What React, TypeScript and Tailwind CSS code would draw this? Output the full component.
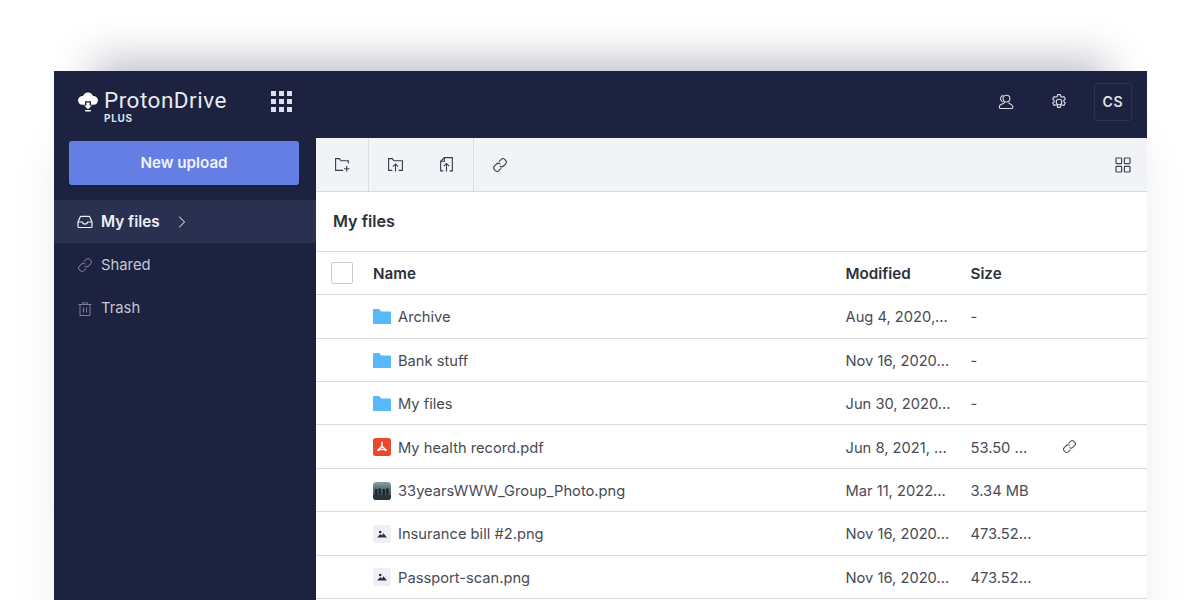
import { ChevronRight } from 'lucide-react';

const FONT = 'font-[Inter,"Noto_Sans",sans-serif]';

type Kind = 'folder' | 'pdf' | 'photo' | 'image';

const ROWS: Array<{ name: string; modified: string; size: string; kind: Kind; linked?: boolean }> = [
  { name: 'Archive', modified: 'Aug 4, 2020,...', size: '-', kind: 'folder' },
  { name: 'Bank stuff', modified: 'Nov 16, 2020...', size: '-', kind: 'folder' },
  { name: 'My files', modified: 'Jun 30, 2020...', size: '-', kind: 'folder' },
  { name: 'My health record.pdf', modified: 'Jun 8, 2021, ...', size: '53.50 ...', kind: 'pdf', linked: true },
  { name: '33yearsWWW_Group_Photo.png', modified: 'Mar 11, 2022...', size: '3.34 MB', kind: 'photo' },
  { name: 'Insurance bill #2.png', modified: 'Nov 16, 2020...', size: '473.52...', kind: 'image' },
  { name: 'Passport-scan.png', modified: 'Nov 16, 2020...', size: '473.52...', kind: 'image' },
];

function LinkIcon({ className }: { className?: string }) {
  return (
    <svg viewBox="0 0 16 16" fill="none" stroke="currentColor" strokeWidth="1.1" className={className}>
      <path d="M7 4.6 9.2 2.4a2.5 2.5 0 0 1 3.5 0l.9.9a2.5 2.5 0 0 1 0 3.5l-2.2 2.2a2.5 2.5 0 0 1-3.5 0" />
      <path d="M9 11.4 6.8 13.6a2.5 2.5 0 0 1-3.5 0l-.9-.9a2.5 2.5 0 0 1 0-3.5l2.2-2.2a2.5 2.5 0 0 1 3.5 0" />
    </svg>
  );
}

function FileIcon({ kind }: { kind: Kind }) {
  if (kind === 'folder') {
    return (
      <svg viewBox="0 0 18 15" className="h-[15px] w-[18px]">
        <path d="M0 .6A.6.6 0 0 1 .6 0h5.6l2 2.4h9.2a.6.6 0 0 1 .6.6v11.4a.6.6 0 0 1-.6.6H.6a.6.6 0 0 1-.6-.6Z" fill="#5ab8f8" />
      </svg>
    );
  }
  if (kind === 'pdf') {
    return (
      <svg viewBox="0 0 18 18" className="h-[18px] w-[18px]">
        <rect width="18" height="18" rx="2.5" fill="#e8492f" />
        <path d="M9 3.8v4.4M9 8.2 4.4 12.6M9 8.2l4.6 4.4M4.4 12.6 9 11.2l4.6 1.4" stroke="#fff" strokeWidth="1.4" fill="none" />
      </svg>
    );
  }
  if (kind === 'photo') {
    return (
      <svg viewBox="0 0 18 18" className="h-[18px] w-[18px]">
        <defs>
          <clipPath id="photo-clip">
            <rect width="18" height="18" rx="3.5" />
          </clipPath>
          <linearGradient id="photo-sky" x1="0" y1="0" x2="0" y2="1">
            <stop offset="0" stopColor="#8f9f9c" />
            <stop offset="0.35" stopColor="#5c7480" />
            <stop offset="1" stopColor="#2b3a44" />
          </linearGradient>
        </defs>
        <g clipPath="url(#photo-clip)">
          <rect width="18" height="18" fill="url(#photo-sky)" />
          <path d="M2 7h2.4v6H2ZM5.5 6.5h2.4v6H5.5ZM9.5 7H12v6H9.5ZM13 6.5h2.6v6H13Z" fill="#1e272c" />
          <rect y="13" width="18" height="5" fill="#28343b" />
        </g>
      </svg>
    );
  }
  return (
    <svg viewBox="0 0 18 18" className="h-[18px] w-[18px]">
      <rect width="18" height="18" rx="2.5" fill="#eef0f5" />
      <circle cx="7.2" cy="7" r="1.3" fill="#2c3140" />
      <path d="M4 12.6 7.4 9l1.5 1.4 1.6-2.2 3.5 4.4Z" fill="#2c3140" />
    </svg>
  );
}

function LogoMark() {
  return (
    <svg viewBox="0 0 20 20" className="h-5 w-5 text-white">
      <path
        d="M10 0.5a5.2 5.2 0 0 1 4.9 3.6A4.6 4.6 0 0 1 20 8.3c0 2.5-1.9 4.5-4.4 4.5H13V9.2H7v3.6H4.4C1.9 12.8 0 10.8 0 8.3a4.6 4.6 0 0 1 5.1-4.2A5.2 5.2 0 0 1 10 .5Z"
        fill="currentColor"
      />
      <path d="M8.4 10.4h3.2v3h2.2L10 17.2l-3.8-3.8h2.2Z" fill="currentColor" />
      <rect x="7" y="18" width="6" height="1.5" rx="0.7" fill="currentColor" />
    </svg>
  );
}

function ToolIcon({ d }: { d: string[] }) {
  return (
    <svg viewBox="0 0 16 16" fill="none" stroke="currentColor" strokeWidth="1.05" className="h-[17px] w-[17px] text-[#3a3e4c]">
      {d.map((p) => (
        <path key={p} d={p} />
      ))}
    </svg>
  );
}

function Th({ className, children }: { className: string; children: string }) {
  return <div className={`pt-[3px] text-[15.2px] font-semibold text-[#2c3039] ${className}`}>{children}</div>;
}

export default function App() {
  return (
    <div className={`h-[600px] w-[1200px] overflow-hidden bg-white pl-[54px] pt-[71px] ${FONT}`}>
      <div className="flex h-[540px] w-[1093px] flex-col bg-[#1c223f] shadow-[0_-50px_40px_-40px_rgba(28,34,63,0.3),0_70px_50px_-10px_rgba(28,34,63,0.11)]">
        {/* top bar */}
        <header className="flex h-[67px] shrink-0 items-center justify-between pb-[6px] pl-6 pr-[15px]">
          <div className="flex items-center">
            <LogoMark />
            <div className="ml-[6px] flex w-[124px] flex-col">
              <span className="mt-[10px] text-[22.5px] font-normal leading-[20px] tracking-[0.5px] text-[#e8eaf2] font-[Roboto,sans-serif]">ProtonDrive</span>
              <span className="mt-[3px] text-[10px] font-bold leading-[10px] tracking-[0.7px] text-[#dfe1ea]">PLUS</span>
            </div>
            <div className="ml-[43px] grid grid-cols-3 gap-[3.5px]">
              {Array.from({ length: 9 }).map((_, i) => (
                <span key={i} className="h-[4.5px] w-[4.5px] bg-[#dde0ea]" />
              ))}
            </div>
          </div>
          <div className="flex items-center">
            <svg viewBox="0 0 18 18" fill="none" stroke="currentColor" strokeWidth="1.1" className="h-[18px] w-[18px] text-[#d8dbe6]">
              <circle cx="9.5" cy="5.6" r="3.4" />
              <path d="M6.4 2.4A3.3 3.3 0 0 0 5 8.4l.9.4" />
              <path d="M7.8 9.6 3 12.3a1.3 1.3 0 0 0-.6 1.1v1.1c0 .6.4 1 1 1h11.4c.6 0 1-.4 1-1v-1c0-.5-.2-.9-.6-1.1l-3.7-2.7" />
            </svg>
            <svg viewBox="0 0 18 18" fill="none" stroke="currentColor" strokeWidth="1.1" className="ml-[35px] h-[18px] w-[18px] text-[#d8dbe6]">
              <circle cx="9" cy="9" r="2.8" />
              <path d="M7.6 1.6h2.8l.4 2 1.2.7 1.9-.7 1.4 2.4-1.5 1.3v1.4l1.5 1.3-1.4 2.4-1.9-.7-1.2.7-.4 2H7.6l-.4-2-1.2-.7-1.9.7-1.4-2.4 1.5-1.3V7.3L2.7 6l1.4-2.4 1.9.7 1.2-.7Z" strokeLinejoin="round" />
            </svg>
            <div className="ml-[26px] flex h-[38px] w-[38px] items-center justify-center rounded-[3px] border border-[#2b3252] text-sm font-semibold tracking-[0.8px] text-[#dfe1ea]">
              CS
            </div>
          </div>
        </header>

        <div className="flex min-h-0 flex-1">
          {/* sidebar */}
          <aside className="w-[262px] shrink-0">
            <div className="pl-[15px] pr-[17px] pt-[3px]">
              <button className="flex h-[44px] w-full items-center justify-center rounded-[3px] bg-[#657ee4] text-[15.2px] font-semibold text-[#f2f4fd]">
                New upload
              </button>
            </div>
            <nav className="mt-[15px] text-[14.8px]">
              <div className="flex h-[43px] items-center bg-[#2a3050] pl-[23px] font-semibold text-[#eef0f5]">
                <svg viewBox="0 0 16 16" fill="none" stroke="currentColor" strokeWidth="1.2" className="h-4 w-4">
                  <path d="M1 8 3.2 3a1 1 0 0 1 .9-.6h7.8a1 1 0 0 1 .9.6L15 8v4.4a1.1 1.1 0 0 1-1.1 1.1H2.1A1.1 1.1 0 0 1 1 12.4Z" />
                  <path d="M1 8h4.3a2.8 2.8 0 0 0 5.4 0H15" />
                </svg>
                <span className="ml-2 pt-[2px] text-[15.3px]">My files</span>
                <ChevronRight className="ml-3 h-5 w-5 text-[#d4d7e2]" strokeWidth={1.25} />
              </div>
              <div className="flex h-[44px] items-center pl-[23px] text-[#c4c7d4]">
                <LinkIcon className="h-4 w-4 text-[#6d7288]" />
                <span className="ml-2">Shared</span>
              </div>
              <div className="flex h-[43px] items-center pl-[23px] text-[#c4c7d4]">
                <svg viewBox="0 0 16 16" fill="none" stroke="currentColor" strokeWidth="1" className="h-4 w-4 text-[#7b8096]">
                  <path d="M1.5 3.5h13M5.5 3.5V1.8h5v1.7M3 3.5v11h10v-11M6.5 6.5v5M9.5 6.5v5" />
                </svg>
                <span className="ml-2">Trash</span>
              </div>
            </nav>
          </aside>

          {/* main */}
          <main className="min-w-0 flex-1 bg-white">
            <div className="flex h-[54px] items-stretch border-b border-[#d8d9e2] bg-[#f2f3f6]">
              <div className="flex w-[53px] items-center justify-center border-r border-[#dcdde4]">
                <ToolIcon d={['M13.5 7V4.5h-7L5 2.5H1.5v11H8.5', 'M12 9.5v5M9.5 12h5']} />
              </div>
              <div className="flex w-[105px] items-center justify-between border-r border-[#dcdde4] pl-[18px] pr-[18px]">
                <ToolIcon d={['M5 13.5H1.5v-11H5l1.5 2h8v9H11', 'M8 14.5V7.5M5.5 10 8 7.5l2.5 2.5']} />
                <ToolIcon d={['M5 14H2.5V5L6 1.5h7.5V14H11', 'M6 1.5V5H2.5', 'M8 14.5V7M5.5 9.5 8 7l2.5 2.5']} />
              </div>
              <div className="flex w-[52px] items-center justify-center">
                <LinkIcon className="h-4 w-4 text-[#3a3e4c]" />
              </div>
              <div className="ml-auto flex items-center pr-[16px]">
                <svg viewBox="0 0 16 16" fill="none" stroke="#3f4352" strokeWidth="1.2" className="h-4 w-4">
                  <rect x="1" y="1" width="5.6" height="5.6" rx="0.5" />
                  <rect x="9.4" y="1" width="5.6" height="5.6" rx="0.5" />
                  <rect x="1" y="9.4" width="5.6" height="5.6" rx="0.5" />
                  <rect x="9.4" y="9.4" width="5.6" height="5.6" rx="0.5" />
                </svg>
              </div>
            </div>

            <div className="flex h-[60px] items-center border-b border-[#d8d9e2] pb-[1px] pl-[17px] text-[16.2px] font-semibold text-[#2c3039]">
              My files
            </div>

            <div className="flex h-[43.3px] items-center border-b border-[#d8d9e2] bg-white pl-[15px]">
              <span className="h-[22px] w-[22px] rounded-[2px] border border-[#c9cbd4] bg-white" />
              <Th className="ml-[20px] w-[472.5px]">Name</Th>
              <Th className="w-[125px]">Modified</Th>
              <Th className="">Size</Th>
            </div>

            {ROWS.map((r) => (
              <div key={r.name} className="flex h-[43.4px] items-center border-b border-[#d8d9e2] pl-[57px] text-[14.7px] text-[#474b55]">
                <div className="flex w-[472.5px] items-center">
                  <span className="flex w-[18px] justify-center pt-px">
                    <FileIcon kind={r.kind} />
                  </span>
                  <span className="ml-[7px] pt-[2px]">{r.name}</span>
                </div>
                <div className="w-[125px] pt-[2px]">{r.modified}</div>
                <div className="w-[91px] pt-[2px]">{r.size}</div>
                {r.linked ? <LinkIcon className="h-[15px] w-[15px] text-[#474b55]" /> : null}
              </div>
            ))}
          </main>
        </div>
      </div>
    </div>
  );
}
